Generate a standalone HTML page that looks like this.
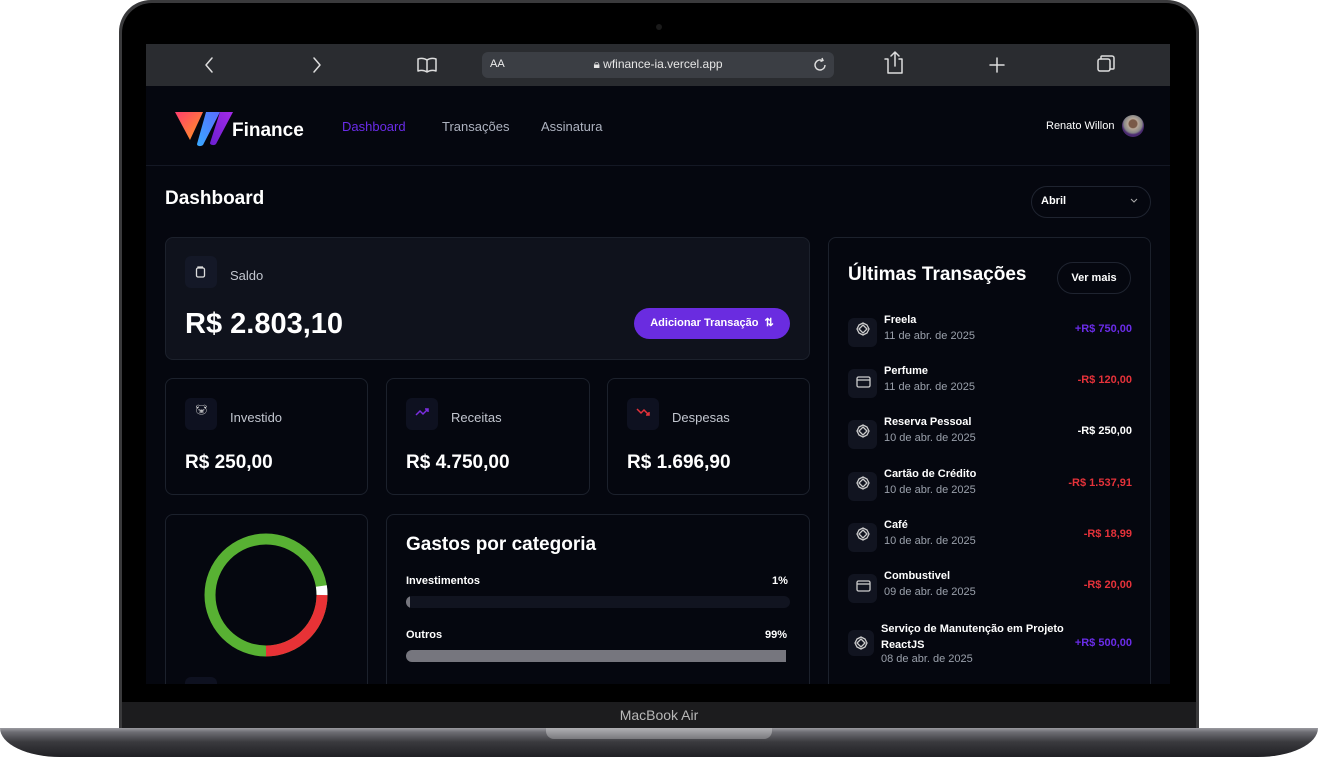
<!DOCTYPE html>
<html><head><meta charset="utf-8"><style>
*{margin:0;padding:0;box-sizing:border-box}
body{width:1318px;height:757px;background:#fff;position:relative;overflow:hidden;font-family:"Liberation Sans",sans-serif;color:#fff}
.a{position:absolute}
.card{position:absolute;border:1px solid #1c212c;border-radius:8px;background:#05070f}
.ib{position:absolute;width:32px;height:32px;border-radius:6px;background:#0e1120}
.lbl{font-size:13px;color:#c2c6cf}
.big{font-weight:bold;font-size:19px}
.tx{position:absolute;left:848px;width:284px;height:40px}
.tx .ic{position:absolute;left:0;top:4px;width:29px;height:29px;border-radius:6px;background:#111420}
.tx .n{position:absolute;left:36px;top:0;font-size:11px;font-weight:bold}
.tx .d{position:absolute;left:36px;top:16px;font-size:11px;color:#9aa0ab}
.tx .v{position:absolute;right:0;top:9px;font-size:11px;font-weight:bold}
.red{color:#e5323a}.pur{color:#6a2ce8}
</style></head><body>
<!-- lid -->
<div class="a" style="left:119px;top:0;width:1080px;height:730px;border-radius:32px 32px 0 0;background:#3a3a3c"></div>
<div class="a" style="left:122px;top:3px;width:1074px;height:727px;border-radius:30px 30px 0 0;background:#000"></div>
<div class="a" style="left:656px;top:24px;width:6px;height:6px;border-radius:50%;background:#1a1a1a"></div>
<div class="a" style="left:122px;top:702px;width:1074px;height:27px;background:#1c1c1e"></div>
<div class="a" style="left:0;top:702px;width:1318px;text-align:center;font-size:14px;color:#b8b8b8;line-height:27px">MacBook Air</div>
<!-- base -->
<div class="a" style="left:0;top:728px;width:1318px;height:29px;border-radius:0 0 60px 60px/0 0 29px 29px;background:linear-gradient(#9a9aa0 0,#6e6e74 4px,#3a3a3e 14px,#202024 29px)"></div>
<div class="a" style="left:546px;top:728px;width:226px;height:11px;border-radius:0 0 8px 8px;background:linear-gradient(#b0b0b4,#7a7a7e)"></div>
<!-- screen -->
<div class="a" style="left:146px;top:44px;width:1024px;height:640px;background:#05070f;overflow:hidden">
 <!-- browser bar -->
 <div class="a" style="left:0;top:0;width:1024px;height:42px;background:#2a2c30"></div>
 <svg class="a" style="left:0;top:0" width="1024" height="42" fill="none" stroke="#ddd" stroke-width="1.5" stroke-linecap="round" stroke-linejoin="round">
  <path d="M66 14l-6 7 6 7"/><path d="M168 14l6 7-6 7"/>
  <path d="M272 15c3-1 6-1 9 1v12c-3-2-6-2-9-1zM281 16c3-2 6-2 9-1v12c-3-1-6-1-9 1"/>
  <path d="M742 15v14h14v-14h-3M739 15h3M749 8v14M745 12l4-4 4 4"/>
  <path d="M851 14v14M844 21h14"/>
  <rect x="952" y="15" width="12" height="12" rx="2"/><path d="M955 15v-2a1 1 0 0 1 1-1h10a2 2 0 0 1 2 2v10a1 1 0 0 1-1 1h-3"/>
 </svg>
 <div class="a" style="left:336px;top:8px;width:352px;height:26px;border-radius:6px;background:#3b3e44"></div>
 <div class="a" style="left:344px;top:14px;font-size:11px;color:#eee">AA</div>
 <div class="a" style="left:336px;top:13px;width:352px;text-align:center;font-size:12px;color:#e6e6e6">&#128274;&#xFE0E; wfinance-ia.vercel.app</div>
 <svg class="a" style="left:667px;top:13px" width="16" height="16" fill="none" stroke="#ddd" stroke-width="1.4"><path d="M12 8a5 5 0 1 1-3-4.6M9 1l1 2.5-2.5 1"/></svg>
 <!-- nav -->
 <svg class="a" style="left:28px;top:67px" width="62" height="36">
  <defs><linearGradient id="g1" x1="0" y1="0" x2="1" y2="1"><stop offset="0" stop-color="#ff3d6e"/><stop offset="1" stop-color="#ff9a1f"/></linearGradient>
  <linearGradient id="g2" x1="0" y1="1" x2="1" y2="0"><stop offset="0" stop-color="#38a9ff"/><stop offset="1" stop-color="#5a6cff"/></linearGradient>
  <linearGradient id="g3" x1="0" y1="1" x2="1" y2="0"><stop offset="0" stop-color="#6a1fd0"/><stop offset="1" stop-color="#a52ae8"/></linearGradient></defs>
  <path d="M1 1h28l-13 28z" fill="url(#g1)"/>
  <path d="M32 1h14l-17 33c-3 2-6 1-6-1z" fill="url(#g2)"/>
  <path d="M46 1h13l-17 32c-2 2-6 1-6-1z" fill="url(#g3)"/>
 </svg>
 <div class="a" style="left:86px;top:76px;font-size:19px;font-weight:bold">Finance</div>
 <div class="a" style="left:196px;top:75px;font-size:13px;color:#6a2ce8">Dashboard</div>
 <div class="a" style="left:296px;top:75px;font-size:13px;color:#aeb3c0">Transações</div>
 <div class="a" style="left:395px;top:75px;font-size:13px;color:#aeb3c0">Assinatura</div>
 <div class="a" style="left:900px;top:76px;font-size:11px">Renato Willon</div>
 <div class="a" style="left:976px;top:71px;width:22px;height:22px;border-radius:50%;background:radial-gradient(circle at 50% 40%,#7a5a48 0 4px,#b8a898 5px,#888 9px,#4a2a70 11px)"></div>
 <div class="a" style="left:0;top:121px;width:1024px;height:1px;background:#141824"></div>
 <div class="a" style="left:19px;top:144px;font-size:19px;font-weight:bold">Dashboard</div>
 <div class="a" style="left:885px;top:142px;width:120px;height:32px;border:1px solid #1f2430;border-radius:16px"></div>
 <div class="a" style="left:895px;top:151px;font-size:11px;font-weight:bold">Abril</div>
 <svg class="a" style="left:983px;top:153px" width="10" height="8" fill="none" stroke="#aaa"><path d="M2 2l3 3 3-3"/></svg>
 <!-- saldo -->
 <div class="card" style="left:19px;top:193px;width:645px;height:123px;background:#0f121c"></div>
 <div class="ib" style="left:39px;top:212px;background:#141827"></div>
 <svg class="a" style="left:49px;top:222px" width="12" height="12" fill="none" stroke="#ddd" stroke-width="1.3"><rect x="1.5" y="2" width="8" height="9" rx="1.5"/><path d="M3 2V1h5"/></svg>
 <div class="a lbl" style="left:84px;top:224px">Saldo</div>
 <div class="a" style="left:39px;top:264px;font-size:29px;font-weight:bold">R$ 2.803,10</div>
 <div class="a" style="left:488px;top:264px;width:156px;height:31px;border-radius:16px;background:#6a2ce0;font-size:11px;font-weight:bold;line-height:31px;text-align:center">Adicionar Transação &nbsp;⇅</div>
 <!-- 3 cards -->
 <div class="card" style="left:19px;top:334px;width:203px;height:117px"></div>
 <div class="card" style="left:240px;top:334px;width:204px;height:117px"></div>
 <div class="card" style="left:461px;top:334px;width:203px;height:117px"></div>
 <div class="ib" style="left:39px;top:354px"></div><div class="ib" style="left:260px;top:354px"></div><div class="ib" style="left:481px;top:354px"></div>
 <div class="a" style="left:49px;top:361px;font-size:10px;color:#ddd">🐷&#xFE0E;</div>
 <svg class="a" style="left:268px;top:362px" width="16" height="12" fill="none" stroke="#7b2ee0" stroke-width="1.5"><path d="M2 9l4-4 3 3 5-5M11 3h3v3"/></svg>
 <svg class="a" style="left:489px;top:362px" width="16" height="12" fill="none" stroke="#e5323a" stroke-width="1.5"><path d="M2 3l4 4 3-3 5 5M11 9h3V6"/></svg>
 <div class="a lbl" style="left:84px;top:366px">Investido</div>
 <div class="a lbl" style="left:305px;top:366px">Receitas</div>
 <div class="a lbl" style="left:526px;top:366px">Despesas</div>
 <div class="a big" style="left:39px;top:408px">R$ 250,00</div>
 <div class="a big" style="left:260px;top:408px">R$ 4.750,00</div>
 <div class="a big" style="left:481px;top:408px">R$ 1.696,90</div>
 <!-- donut -->
 <div class="card" style="left:19px;top:470px;width:203px;height:190px"></div>
 <svg class="a" style="left:58px;top:489px" width="124" height="124" viewBox="0 0 124 124">
  <circle cx="62" cy="62" r="56" fill="none" stroke="#58b133" stroke-width="11"/>
  <path d="M118 62A56 56 0 0 1 62 118" fill="none" stroke="#e83236" stroke-width="11"/>
  <path d="M117.4 53A56 56 0 0 1 118 62" fill="none" stroke="#fff" stroke-width="11"/>
 </svg>
 <div class="a" style="left:39px;top:633px;width:32px;height:20px;border-radius:6px;background:#0e1120"></div>
 <!-- gastos -->
 <div class="card" style="left:240px;top:470px;width:424px;height:190px"></div>
 <div class="a" style="left:260px;top:490px;font-size:19px;font-weight:bold">Gastos por categoria</div>
 <div class="a" style="left:260px;top:531px;font-size:11px;font-weight:bold">Investimentos</div>
 <div class="a" style="left:626px;top:531px;font-size:11px;font-weight:bold">1%</div>
 <div class="a" style="left:260px;top:552px;width:384px;height:12px;border-radius:6px;background:#111420;overflow:hidden"><div style="width:4px;height:12px;background:#76767e;border-radius:6px 0 0 6px"></div></div>
 <div class="a" style="left:260px;top:585px;font-size:11px;font-weight:bold">Outros</div>
 <div class="a" style="left:619px;top:585px;font-size:11px;font-weight:bold">99%</div>
 <div class="a" style="left:260px;top:606px;width:380px;height:12px;border-radius:6px 0 0 6px;background:#76767e"></div>
 <!-- transactions -->
 <div class="card" style="left:682px;top:193px;width:323px;height:470px"></div>
 <div class="a" style="left:702px;top:220px;font-size:19px;font-weight:bold">Últimas Transações</div>
 <div class="a" style="left:911px;top:218px;width:74px;height:32px;border:1px solid #1f2430;border-radius:16px;font-size:11px;font-weight:bold;text-align:center;line-height:30px">Ver mais</div>
</div>
<!-- transaction rows (page coords) -->
<div class="tx" style="top:314px"><div class="ic"></div><div class="n">Freela</div><div class="d">11 de abr. de 2025</div><div class="v pur">+R$ 750,00</div></div>
<div class="tx" style="top:365px"><div class="ic"></div><div class="n">Perfume</div><div class="d">11 de abr. de 2025</div><div class="v red">-R$ 120,00</div></div>
<div class="tx" style="top:416px"><div class="ic"></div><div class="n">Reserva Pessoal</div><div class="d">10 de abr. de 2025</div><div class="v">-R$ 250,00</div></div>
<div class="tx" style="top:468px"><div class="ic"></div><div class="n">Cartão de Crédito</div><div class="d">10 de abr. de 2025</div><div class="v red">-R$ 1.537,91</div></div>
<div class="tx" style="top:519px"><div class="ic"></div><div class="n">Café</div><div class="d">10 de abr. de 2025</div><div class="v red">-R$ 18,99</div></div>
<div class="tx" style="top:570px"><div class="ic"></div><div class="n">Combustivel</div><div class="d">09 de abr. de 2025</div><div class="v red">-R$ 20,00</div></div>
<div class="tx" style="top:621px;height:46px"><div class="ic" style="top:9px;width:26px;height:26px"></div><div class="n" style="left:33px;width:210px;line-height:16px">Serviço de Manutenção em Projeto ReactJS</div><div class="d" style="left:33px;top:32px">08 de abr. de 2025</div><div class="v pur" style="top:16px">+R$ 500,00</div></div>
<svg class="a" style="left:848px;top:314px" width="30" height="370" fill="none" stroke="#ccc" stroke-width="1.3">
 <g id="p"><path d="M15 11l4 4-4 4-4-4zM11 11l4-2 4 2 2 4-2 4-4 2-4-2-2-4z"/></g>
 <rect x="9" y="63" width="13" height="10" rx="1.5"/><path d="M9 66h13"/>
 <use href="#p" y="102"/><use href="#p" y="154"/><use href="#p" y="205"/>
 <rect x="9" y="267" width="13" height="10" rx="1.5"/><path d="M9 270h13"/>
 <use href="#p" x="-2" y="314"/>
</svg>
</body></html>
